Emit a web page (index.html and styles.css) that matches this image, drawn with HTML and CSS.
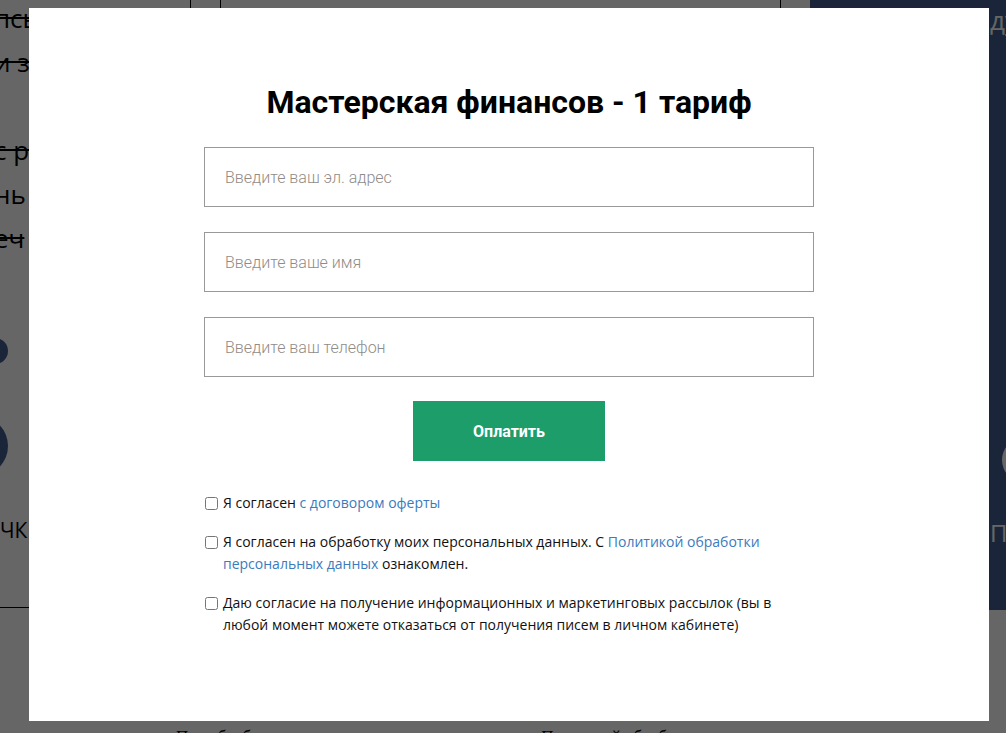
FILE: index.html
```html
<!DOCTYPE html>
<html lang="ru">
<head>
    <meta charset="UTF-8">
    <meta name="viewport" content="width=device-width, initial-scale=1.0">
    <title>Мастерская финансов - 1 тариф</title>
    <link rel="stylesheet" href="styles.css">
</head>
<body>
    <div class="page">
        <div class="page-cols">
            <div class="col-left">
                <p class="frag frag-strike">псь</p>
                <p class="frag frag-strike">и з</p>
                <p class="frag frag-gap frag-strike">с р</p>
                <p class="frag">нь</p>
                <p class="frag frag-strike">еч</p>
                <span class="dot dot-small"></span>
                <span class="dot dot-big"></span>
                <p class="frag-label">ЧК</p>
            </div>
            <div class="col-line"></div>
            <div class="col-mid"></div>
            <div class="col-line"></div>
            <div class="col-dark">
                <p class="dark-title">ду</p>
                <span class="dark-circle"></span>
                <p class="dark-label">П</p>
            </div>
        </div>
        <p class="page-foot">Пол обработку персональных данных ознакомлен Политикой обработки данных</p>
    </div>

    <div class="overlay"></div>

    <div class="modal">
        <h2 class="modal-title">Мастерская финансов - 1 тариф</h2>

        <form class="pay-form" id="payForm">
            <input type="email" class="field" placeholder="Введите ваш эл. адрес">
            <input type="text" class="field" placeholder="Введите ваше имя">
            <input type="tel" class="field" placeholder="Введите ваш телефон">
            <button type="submit" class="pay-btn">Оплатить</button>

            <div class="consents">
                <label class="consent">
                    <input type="checkbox">
                    <span>Я согласен <a href="#">с договором оферты</a></span>
                </label>
                <label class="consent">
                    <input type="checkbox">
                    <span>Я согласен на обработку моих персональных данных. С <a href="#">Политикой обработки персональных данных</a> ознакомлен.</span>
                </label>
                <label class="consent">
                    <input type="checkbox">
                    <span>Даю согласие на получение информационных и маркетинговых рассылок (вы в любой момент можете отказаться от получения писем в личном кабинете)</span>
                </label>
            </div>
        </form>
    </div>
</body>
</html>
```

FILE: styles.css
```css
body {
    margin: 0;
    background: #fff;
    color: #000;
    font-family: 'Open Sans', sans-serif;
    overflow: hidden;
}

/* page behind the popup */
.page-cols {
    display: grid;
    grid-template-columns: 190px 30px 560px 30px 196px;
    height: 610px;
}

.col-left {
    overflow: hidden;
    border-bottom: 1px solid #000;
    height: 608px;
    box-sizing: border-box;
}

.frag {
    margin: 0;
    font-size: 26px;
    line-height: 44px;
    white-space: nowrap;
    margin-left: -6px;
}

.frag:first-child {
    margin-top: -4px;
}

.frag-gap {
    margin-top: 44px;
}

.frag-strike {
    text-decoration: line-through;
}

.dot {
    display: block;
    border-radius: 50%;
    background: #445d8f;
}

.dot-small {
    width: 26px;
    height: 26px;
    margin: 78px 0 0 -18px;
}

.dot-big {
    width: 60px;
    height: 60px;
    margin: 52px 0 0 -52px;
}

.frag-label {
    margin: 40px 0 0;
    font-size: 21px;
}

.col-line {
    border-left: 1px solid #000;
}

.col-mid {
    border-left: 1px solid #000;
}

.col-dark {
    background: #445d8f;
    color: #fff;
    overflow: hidden;
    padding-left: 180px;
}

.dark-title {
    margin: 2px 0 0;
    font-size: 26px;
    white-space: nowrap;
}

.dark-circle {
    display: block;
    width: 44px;
    height: 44px;
    margin-top: 400px;
    margin-left: 12px;
    border-radius: 50%;
    background: #fff;
}

.dark-label {
    margin: 34px 0 0;
    font-size: 24px;
}

.page-foot {
    margin: 117px 0 0 176px;
    font-family: 'Liberation Serif', serif;
    font-size: 17px;
    white-space: nowrap;
}

.overlay {
    position: fixed;
    inset: 0;
    background: rgba(0, 0, 0, 0.6);
}

/* popup */
.modal {
    position: fixed;
    top: 8px;
    left: 29px;
    width: 960px;
    height: 713px;
    box-sizing: border-box;
    padding-top: 75px;
    background: #fff;
}

.modal-title {
    margin: 0 0 26px;
    font-family: 'Roboto', sans-serif;
    font-weight: 700;
    font-size: 32px;
    line-height: 38px;
    text-align: center;
    color: #000;
}

.pay-form {
    width: 610px;
    margin: 0 auto;
    display: flex;
    flex-direction: column;
    gap: 25px;
}

.field {
    height: 60px;
    box-sizing: border-box;
    padding: 0 20px;
    border: 1px solid #999;
    border-radius: 0;
    font-family: 'Roboto', sans-serif;
    font-weight: 300;
    font-size: 16px;
    color: #333;
    outline: none;
}

.field::placeholder {
    color: #8f8c88;
}

.pay-btn {
    align-self: center;
    width: 192px;
    height: 60px;
    margin-top: -1px;
    border: none;
    background: #1c9d6a;
    color: #fff;
    font-family: 'Roboto', sans-serif;
    font-weight: 700;
    font-size: 16px;
    cursor: pointer;
}

.consents {
    margin-top: 6px;
    display: flex;
    flex-direction: column;
    gap: 17px;
}

.consent {
    display: flex;
    align-items: flex-start;
    gap: 5px;
    font-size: 14px;
    line-height: 22px;
    color: #111;
}

.consent input {
    width: 13px;
    height: 13px;
    margin: 5px 0 0 1px;
    flex-shrink: 0;
}

.consent a {
    color: #3b7bbd;
    text-decoration: none;
}
```
